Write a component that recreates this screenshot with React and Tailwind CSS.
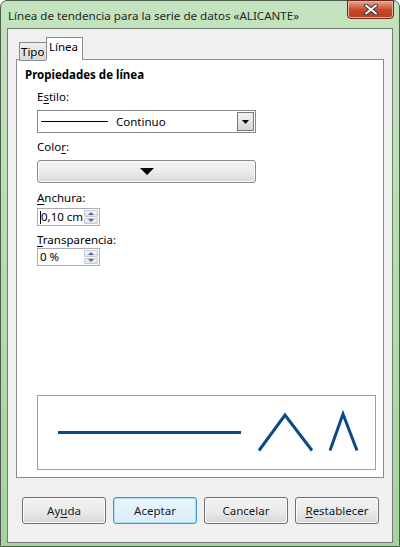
import React from "react";

const font = { fontFamily: '"Noto Sans", "Open Sans", sans-serif' };

function U({ children }) {
    return <span className="underline underline-offset-2">{children}</span>;
}

function SpinBox({ value, caret }) {
    return (
        <div className="w-[63px] h-[18px] flex border border-[#abadb3] bg-white">
            <div className="flex-1 flex items-center pl-[2px] text-[11.5px] text-black leading-none">
                {caret && <span className="w-px h-[13px] bg-black" />}
                {value}
            </div>
            <div className="w-[15px] flex flex-col gap-px py-px pr-px">
                <div className="flex-1 flex items-center justify-center border border-[#c5c9d0] bg-gradient-to-b from-[#f5f6f7] to-[#dfe2e6] rounded-[1px]">
                    <svg width="6" height="3" viewBox="0 0 6 3"><path d="M0 3 L3 0 L6 3 Z" fill="#4c6c9a" /></svg>
                </div>
                <div className="flex-1 flex items-center justify-center border border-[#c5c9d0] bg-gradient-to-b from-[#f5f6f7] to-[#dfe2e6] rounded-[1px]">
                    <svg width="6" height="3" viewBox="0 0 6 3"><path d="M0 0 L3 3 L6 0 Z" fill="#4c6c9a" /></svg>
                </div>
            </div>
        </div>
    );
}

function DlgButton({ children, focused }) {
    return (
        <button
            className={`w-[84px] h-[27px] rounded-[3px] border text-[11.5px] text-[#1a1a1a] ${
                focused
                    ? "border-[#3c9ad6] bg-gradient-to-b from-[#eaf6fd] to-[#d9eef9] shadow-[inset_0_0_0_1px_#a9dff6]"
                    : "border-[#707070] bg-gradient-to-b from-[#f2f2f2] via-[#ebebeb] to-[#d6d6d6] shadow-[inset_0_0_0_1px_#fbfbfb]"
            }`}
        >
            {children}
        </button>
    );
}

export default function App() {
    return (
        <div className="w-[400px] h-[547px] bg-white" style={font}>
            <div className="w-full h-full flex flex-col rounded-t-[7px] border border-[#4d5e4d] bg-gradient-to-b from-[#c4e3bf] via-[#b7dbb1] to-[#a6d3a0] px-[6px] pb-[3px]">
                {/* Title bar */}
                <div className="h-[27px] shrink-0 flex items-start justify-between">
                    <div className="pt-[6px] pl-px text-[11.6px] text-[#1e2b1e]">
                        Línea de tendencia para la serie de datos «ALICANTE»
                    </div>
                    <div className="w-[47px] h-[19px] -mt-px mr-[-1px] rounded-b-[4px] border border-[#6b2a1c] bg-gradient-to-b from-[#e8a692] via-[#cc4a2c] to-[#b83a1f] flex items-center justify-center shadow-[inset_0_0_0_1px_#eab4a4]">
                        <svg width="14" height="11" viewBox="0 0 14 11">
                            <path d="M2 1.5 L12 9.5 M12 1.5 L2 9.5" stroke="#3b3b44" strokeWidth="4" strokeLinecap="round" />
                            <path d="M2 1.5 L12 9.5 M12 1.5 L2 9.5" stroke="#ffffff" strokeWidth="2" strokeLinecap="round" />
                        </svg>
                    </div>
                </div>

                {/* Client */}
                <div className="flex-1 flex flex-col border border-[#6f806f] bg-[#f0f0f0] px-[8px] pt-[8px]">
                    {/* Tabs */}
                    <div className="flex items-end h-[23px] pl-[3px] relative z-10">
                        <div className="w-[27px] h-[19px] border border-[#898c95] border-r-0 bg-gradient-to-b from-[#f0f0f0] to-[#d8d8d8] text-[11.5px] leading-[17px] text-black pl-px -mb-px">
                            Tipo
                        </div>
                        <div className="w-[37px] h-[23px] border border-[#898c95] border-b-0 bg-white text-[11.5px] leading-[18px] text-black pl-[2px]">
                            Línea
                        </div>
                    </div>

                    {/* Panel */}
                    <div className="h-[419px] -mt-px border border-[#898c95] bg-white pl-[8px] pt-[7px] flex flex-col">
                        <div className="text-[11.5px] font-bold text-black leading-[16px]">Propiedades de línea</div>

                        <div className="pl-[12px] flex flex-col">
                            <div className="mt-[6px] text-[11.5px] text-black leading-[16px]">
                                E<U>s</U>tilo:
                            </div>
                            <div className="mt-[5px] w-[219px] h-[23px] border border-[#828790] bg-white flex items-center">
                                <span className="ml-[3px] w-[67px] h-px bg-black" />
                                <span className="ml-[8px] flex-1 text-[11.5px] text-black">Continuo</span>
                                <div className="w-[17px] h-[19px] mr-px border border-[#7a7a7a] bg-gradient-to-b from-[#f3f3f3] to-[#d5d5d5] flex items-center justify-center">
                                    <svg width="7" height="4" viewBox="0 0 7 4"><path d="M0 0 L7 0 L3.5 4 Z" fill="#000" /></svg>
                                </div>
                            </div>

                            <div className="mt-[6px] text-[11.5px] text-black leading-[16px]">
                                Colo<U>r</U>:
                            </div>
                            <div className="mt-[5px] w-[219px] h-[23px] rounded-[3px] border border-[#8a8a8a] bg-gradient-to-b from-[#f3f3f3] via-[#ebebeb] to-[#d9d9d9] flex items-center justify-center shadow-[inset_0_0_0_1px_#fafafa]">
                                <svg width="14" height="7" viewBox="0 0 14 7"><path d="M0 0 L14 0 L7 7 Z" fill="#000" /></svg>
                            </div>

                            <div className="mt-[7px] text-[11.5px] text-black leading-[16px]">
                                <U>A</U>nchura:
                            </div>
                            <div className="mt-[2px]">
                                <SpinBox value="0,10 cm" caret />
                            </div>

                            <div className="mt-[6px] text-[11.5px] text-black leading-[16px]">
                                <U>T</U>ransparencia:
                            </div>
                            <div className="mt-0">
                                <SpinBox value="0 %" />
                            </div>
                        </div>

                        {/* Preview */}
                        <div className="mt-auto mb-[7px] ml-[12px] w-[339px] h-[75px] border border-[#a0a0a0] bg-white">
                            <svg width="337" height="73" viewBox="0 0 337 73">
                                <path d="M20 36.5 L203 36.5" stroke="#0b4a86" strokeWidth="3" fill="none" />
                                <path d="M221 54.5 L247 19 L274 54.5" stroke="#0b4a86" strokeWidth="3" fill="none" />
                                <path d="M292 54.5 L305 18 L319 54.5" stroke="#0b4a86" strokeWidth="3" fill="none" />
                            </svg>
                        </div>
                    </div>

                    {/* Buttons */}
                    <div className="mt-[19px] pl-[6px] flex gap-[7px]">
                        <DlgButton>Ay<U>u</U>da</DlgButton>
                        <DlgButton focused>Aceptar</DlgButton>
                        <DlgButton>Cancelar</DlgButton>
                        <DlgButton><U>R</U>establecer</DlgButton>
                    </div>
                </div>
            </div>
        </div>
    );
}
